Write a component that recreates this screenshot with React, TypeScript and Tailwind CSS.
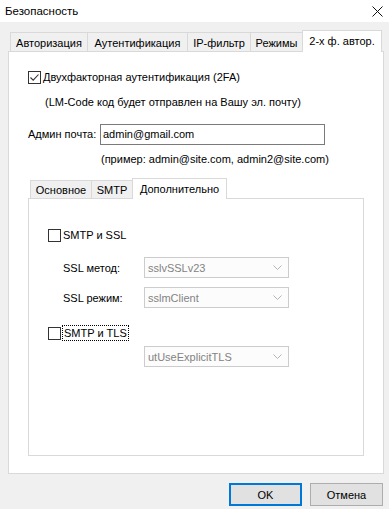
import React from "react";

function CheckBox({ checked }: { checked?: boolean }) {
  return (
    <div className="w-[13px] h-[13px] border border-[#333333] bg-white flex items-center justify-center shrink-0">
      {checked && (
        <svg width="11" height="11" viewBox="0 0 11 11">
          <path d="M1.5 5.5 L4.2 8.2 L9.5 2.5" fill="none" stroke="#333333" strokeWidth="1.1" />
        </svg>
      )}
    </div>
  );
}

function Combo({ value }: { value: string }) {
  return (
    <div className="w-[145px] h-[21px] border border-[#cccccc] bg-[#fcfcfc] flex items-center justify-between pl-[3px] pr-[6px] text-[#838383]">
      <span>{value}</span>
      <svg width="9" height="5" viewBox="0 0 9 5">
        <path d="M0.5 0.5 L4.5 4.5 L8.5 0.5" fill="none" stroke="#b5b5b5" strokeWidth="1" />
      </svg>
    </div>
  );
}

export default function App() {
  return (
    <div className="w-[389px] h-[509px] bg-[#f0f0f0] text-[11px] leading-[14px] text-black font-['Liberation_Sans',Arial,sans-serif] whitespace-nowrap overflow-hidden">
      {/* Title bar */}
      <div className="h-[22px] bg-white flex items-center justify-between pl-[5px] pr-[6px]">
        <span className="text-[11.5px]">Безопасность</span>
        <svg width="11" height="11" viewBox="0 0 11 11" className="mt-[1px]">
          <path d="M0.5 0.5 L10.5 10.5 M10.5 0.5 L0.5 10.5" stroke="#111111" strokeWidth="1" />
        </svg>
      </div>

      {/* Outer tabs */}
      <div className="ml-[8px] mt-[8px]">
        <div className="flex items-end pl-[2px] h-[21px] relative z-10">
          <div className="w-[77px] h-[19px] border-t border-l border-[#d9d9d9] bg-[#f0f0f0] flex items-center justify-center pt-[1px]">Авторизация</div>
          <div className="w-[100px] h-[19px] border-t border-l border-[#d9d9d9] bg-[#f0f0f0] flex items-center justify-center pt-[1px]">Аутентификация</div>
          <div className="w-[63px] h-[19px] border-t border-l border-[#d9d9d9] bg-[#f0f0f0] flex items-center justify-center pt-[1px]">IP-фильтр</div>
          <div className="w-[52px] h-[19px] border-t border-l border-[#d9d9d9] bg-[#f0f0f0] flex items-center justify-center pt-[1px]">Режимы</div>
          <div className="w-[80px] h-[22px] -mb-px border-t border-l border-r border-[#d9d9d9] bg-white flex items-center justify-center pb-[1px]">2-х ф. автор.</div>
        </div>
        <div className="w-[376px] h-[423px] border border-[#d9d9d9] bg-white pl-[19px]">
          <div className="mt-[18px] h-[14px] flex items-center">
            <CheckBox checked />
            <span className="ml-[2px]">Двухфакторная аутентификация (2FA)</span>
          </div>
          <div className="mt-[10px] h-[16px] flex items-center ml-[17px]">
            (LM-Code код будет отправлен на Вашу эл. почту)
          </div>
          <div className="mt-[14px] h-[20px] flex items-center">
            <span className="w-[72px] shrink-0">Админ почта:</span>
            <div className="w-[225px] h-[21px] border border-[#7a7a7a] bg-white flex items-center pl-[2px]">admin@gmail.com</div>
          </div>
          <div className="mt-[7px] h-[16px] flex items-center ml-[73px]">
            (пример: admin@site.com, admin2@site.com)
          </div>

          {/* Inner tabs */}
          <div className="mt-[11px]">
            <div className="flex items-end pl-[2px] h-[20px] relative z-10">
              <div className="w-[61px] h-[18px] border-t border-l border-[#d9d9d9] bg-[#f0f0f0] flex items-center justify-center pt-[1px]">Основное</div>
              <div className="w-[41px] h-[18px] border-t border-l border-[#d9d9d9] bg-[#f0f0f0] flex items-center justify-center pt-[1px]">SMTP</div>
              <div className="w-[95px] h-[21px] -mb-px border-t border-l border-r border-[#d9d9d9] bg-white flex items-center justify-center pb-[1px]">Дополнительно</div>
            </div>
            <div className="w-[336px] h-[258px] border border-[#d9d9d9] bg-white pl-[19px]">
              <div className="mt-[29px] h-[14px] flex items-center">
                <CheckBox />
                <span className="ml-[2px]">SMTP и SSL</span>
              </div>
              <div className="mt-[15px] h-[21px] flex items-center">
                <span className="w-[81px] ml-[15px] shrink-0">SSL метод:</span>
                <Combo value="sslvSSLv23" />
              </div>
              <div className="mt-[9px] h-[21px] flex items-center">
                <span className="w-[81px] ml-[15px] shrink-0">SSL режим:</span>
                <Combo value="sslmClient" />
              </div>
              <div className="mt-[17px] h-[16px] flex items-center">
                <CheckBox />
                <span className="ml-[1px] h-[16px] px-[1px] flex items-center border border-dotted border-black">SMTP и TLS</span>
              </div>
              <div className="mt-[5px] h-[21px] flex items-center">
                <span className="w-[81px] ml-[15px] shrink-0"></span>
                <Combo value="utUseExplicitTLS" />
              </div>
            </div>
          </div>
        </div>
      </div>

      {/* Buttons */}
      <div className="mt-[9px] flex justify-end gap-[8px] pr-[6px]">
        <div className="w-[73px] h-[23px] border-2 border-[#0078d7] bg-[#e1e1e1] flex items-center justify-center">OK</div>
        <div className="w-[73px] h-[23px] border border-[#adadad] bg-[#e1e1e1] flex items-center justify-center">Отмена</div>
      </div>
    </div>
  );
}
